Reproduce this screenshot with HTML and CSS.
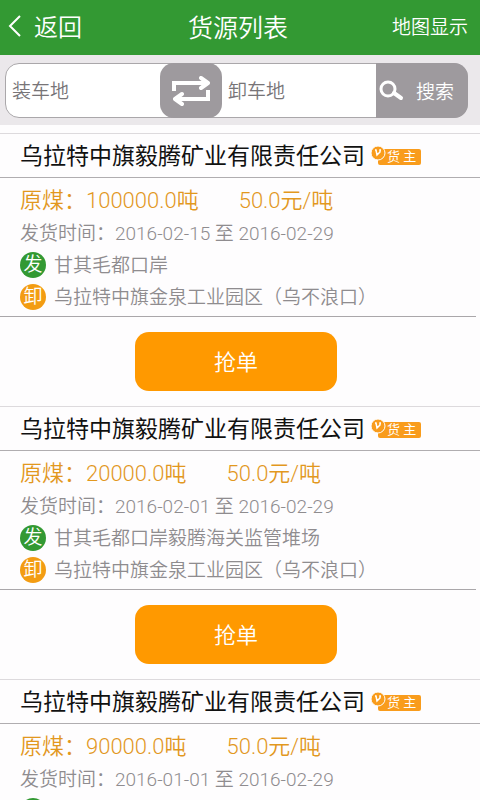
FILE: index.html
```html
<!DOCTYPE html>
<html lang="zh-CN">
<head>
<meta charset="utf-8">
<meta name="viewport" content="width=device-width, initial-scale=1">
<title>货源列表</title>
<link rel="stylesheet" href="styles.css">
</head>
<body>
<header class="topbar">
  <a class="back" href="#"><svg width="14" height="24" viewBox="0 0 14 24" aria-hidden="true"><path d="M12 2 2 12l10 10" fill="none" stroke="currentColor" stroke-width="2"/></svg>返回</a>
  <h1>货源列表</h1>
  <a class="map" href="#">地图显示</a>
</header>
<form class="search">
  <div class="search-box">
    <input class="from" type="text" placeholder="装车地" aria-label="装车地">
    <button class="swap" type="button" aria-label="交换"><svg width="40" height="30" viewBox="0 0 40 30" aria-hidden="true" fill="none" stroke="currentColor" stroke-width="4"><path d="M3 15V7H36M37 14v9H5"/><path d="m30 2 7 5-7 5M11 18l-7 5 7 5" stroke-linecap="round" stroke-linejoin="round"/></svg></button>
    <input class="to" type="text" placeholder="卸车地" aria-label="卸车地">
    <button class="go" type="submit"><svg width="25" height="21" viewBox="0 0 25 21" aria-hidden="true" fill="none" stroke="currentColor"><circle cx="9" cy="9" r="7" stroke-width="3"/><path d="m15 13 7 5" stroke-width="4" stroke-linecap="round"/></svg>搜索</button>
  </div>
</form>
<main class="list">
  <article class="card">
    <h2>乌拉特中旗毅腾矿业有限责任公司<span class="badge"><svg width="16" height="16" viewBox="0 0 16 16" aria-hidden="true"><circle cx="8" cy="8" r="7" fill="#f99c1c" stroke="#fff"/><path d="M5 5h1l1 5 3-3V5h1" fill="none" stroke="#fff" stroke-width="1.500"/></svg><span class="owner">货 主</span></span></h2>
    <div class="details">
      <p class="price"><span>原煤：100000.0吨</span><span>50.0元/吨</span></p>
      <p>发货时间：2016-02-15 至 2016-02-29</p>
      <p class="place"><span class="dot send">发</span>甘其毛都口岸</p>
      <p class="place"><span class="dot unload">卸</span>乌拉特中旗金泉工业园区（乌不浪口）</p>
    </div>
    <div class="action"><button type="button">抢单</button></div>
  </article>
  <article class="card">
    <h2>乌拉特中旗毅腾矿业有限责任公司<span class="badge"><svg width="16" height="16" viewBox="0 0 16 16" aria-hidden="true"><circle cx="8" cy="8" r="7" fill="#f99c1c" stroke="#fff"/><path d="M5 5h1l1 5 3-3V5h1" fill="none" stroke="#fff" stroke-width="1.500"/></svg><span class="owner">货 主</span></span></h2>
    <div class="details">
      <p class="price"><span>原煤：20000.0吨</span><span>50.0元/吨</span></p>
      <p>发货时间：2016-02-01 至 2016-02-29</p>
      <p class="place"><span class="dot send">发</span>甘其毛都口岸毅腾海关监管堆场</p>
      <p class="place"><span class="dot unload">卸</span>乌拉特中旗金泉工业园区（乌不浪口）</p>
    </div>
    <div class="action"><button type="button">抢单</button></div>
  </article>
  <article class="card">
    <h2>乌拉特中旗毅腾矿业有限责任公司<span class="badge"><svg width="16" height="16" viewBox="0 0 16 16" aria-hidden="true"><circle cx="8" cy="8" r="7" fill="#f99c1c" stroke="#fff"/><path d="M5 5h1l1 5 3-3V5h1" fill="none" stroke="#fff" stroke-width="1.500"/></svg><span class="owner">货 主</span></span></h2>
    <div class="details">
      <p class="price"><span>原煤：90000.0吨</span><span>50.0元/吨</span></p>
      <p>发货时间：2016-01-01 至 2016-02-29</p>
      <p class="place"><span class="dot send"></span></p>
    </div>
  </article>
</main>
</body>
</html>
```
FILE: styles.css
```css
* { box-sizing: border-box; }

body {
  margin: 0;
  height: 100vh;
  display: flex;
  flex-direction: column;
  background: #fefdfe;
  color: #8f8c8f;
  font-family: Roboto, "Noto Sans CJK SC", sans-serif;
  font-size: 19px;
  font-weight: 350;
}

h1, h2, p { margin: 0; font-weight: inherit; }
button, input { font: inherit; border: 0; margin: 0; }
a { color: inherit; text-decoration: none; }
svg { display: block; flex: none; }

.topbar {
  flex: none;
  height: 55px;
  padding: 0 12px 4px 8px;
  display: grid;
  grid-template-columns: 1fr auto 1fr;
  align-items: center;
  background: #339933;
  color: #fff;
}
.back { display: flex; align-items: center; gap: 12px; font-size: 24px; }
.topbar h1 { font-size: 25px; }
.map { justify-self: end; }

.search {
  flex: none;
  padding: 8px 12px 7px 5px;
  background: #ebe8eb;
}
.search-box {
  display: flex;
  height: 55px;
  border: 1px solid #aaa7aa;
  border-radius: 14px;
  background: #fff;
}
.search-box input {
  flex: 1 1 0;
  min-width: 0;
  padding: 2px 6px 0;
  background: transparent;
  color: #777;
  outline: 0;
}
.search-box input::placeholder { color: #777477; opacity: 1; }
.search-box button {
  flex: none;
  margin: -1px 0;
  display: flex;
  align-items: center;
  background: #9e9a9e;
  color: #fff;
}
.search-box .swap {
  width: 62px;
  padding: 0;
  justify-content: center;
  border-radius: 14px;
}
.search-box .go {
  width: 92px;
  margin-right: -1px;
  padding: 0 0 0 3px;
  gap: 12px;
  border-radius: 0 14px 14px 0;
}

.list {
  flex: 1;
  min-height: 0;
  padding-top: 8px;
  overflow-y: auto;
  scrollbar-width: none;
}
.card { border-top: 1px solid #dddadd; }
.card h2 {
  height: 44px;
  padding: 0 0 3px 20px;
  display: flex;
  align-items: center;
  border-bottom: 1px solid #b0adb0;
  color: #111;
  font-size: 23px;
  font-weight: 400;
  white-space: nowrap;
}
.badge { display: flex; align-items: center; margin: 6px 0 0 5px; }
.badge svg { margin: -8px -8px 0 0; z-index: 1; }
.owner {
  width: 43px;
  height: 16px;
  padding-left: 9px;
  border-radius: 2px;
  background: #f99c1c;
  color: #fff;
  font-size: 13px;
  line-height: 16px;
}
.details {
  margin-right: 4px;
  padding: 6px 0 2px 20px;
  border-bottom: 1px solid #aaa7aa;
  line-height: 32px;
}
.details .price {
  display: flex;
  gap: 40px;
  color: #e2981e;
  font-size: 22px;
  line-height: 34px;
}
.place { display: flex; align-items: center; gap: 8px; height: 32px; }
.dot {
  width: 26px;
  height: 26px;
  margin-bottom: 2px;
  border-radius: 50%;
  color: #fff;
  line-height: 26px;
  text-align: center;
}
.send { background: #339933; }
.unload { background: #f39c12; }
.action { padding: 15px 8px 15px 0; display: flex; justify-content: center; }
.action button {
  width: 202px;
  height: 59px;
  padding: 0 0 4px;
  border-radius: 14px;
  background: #ff9900;
  color: #fff;
  font-size: 22px;
}
```
